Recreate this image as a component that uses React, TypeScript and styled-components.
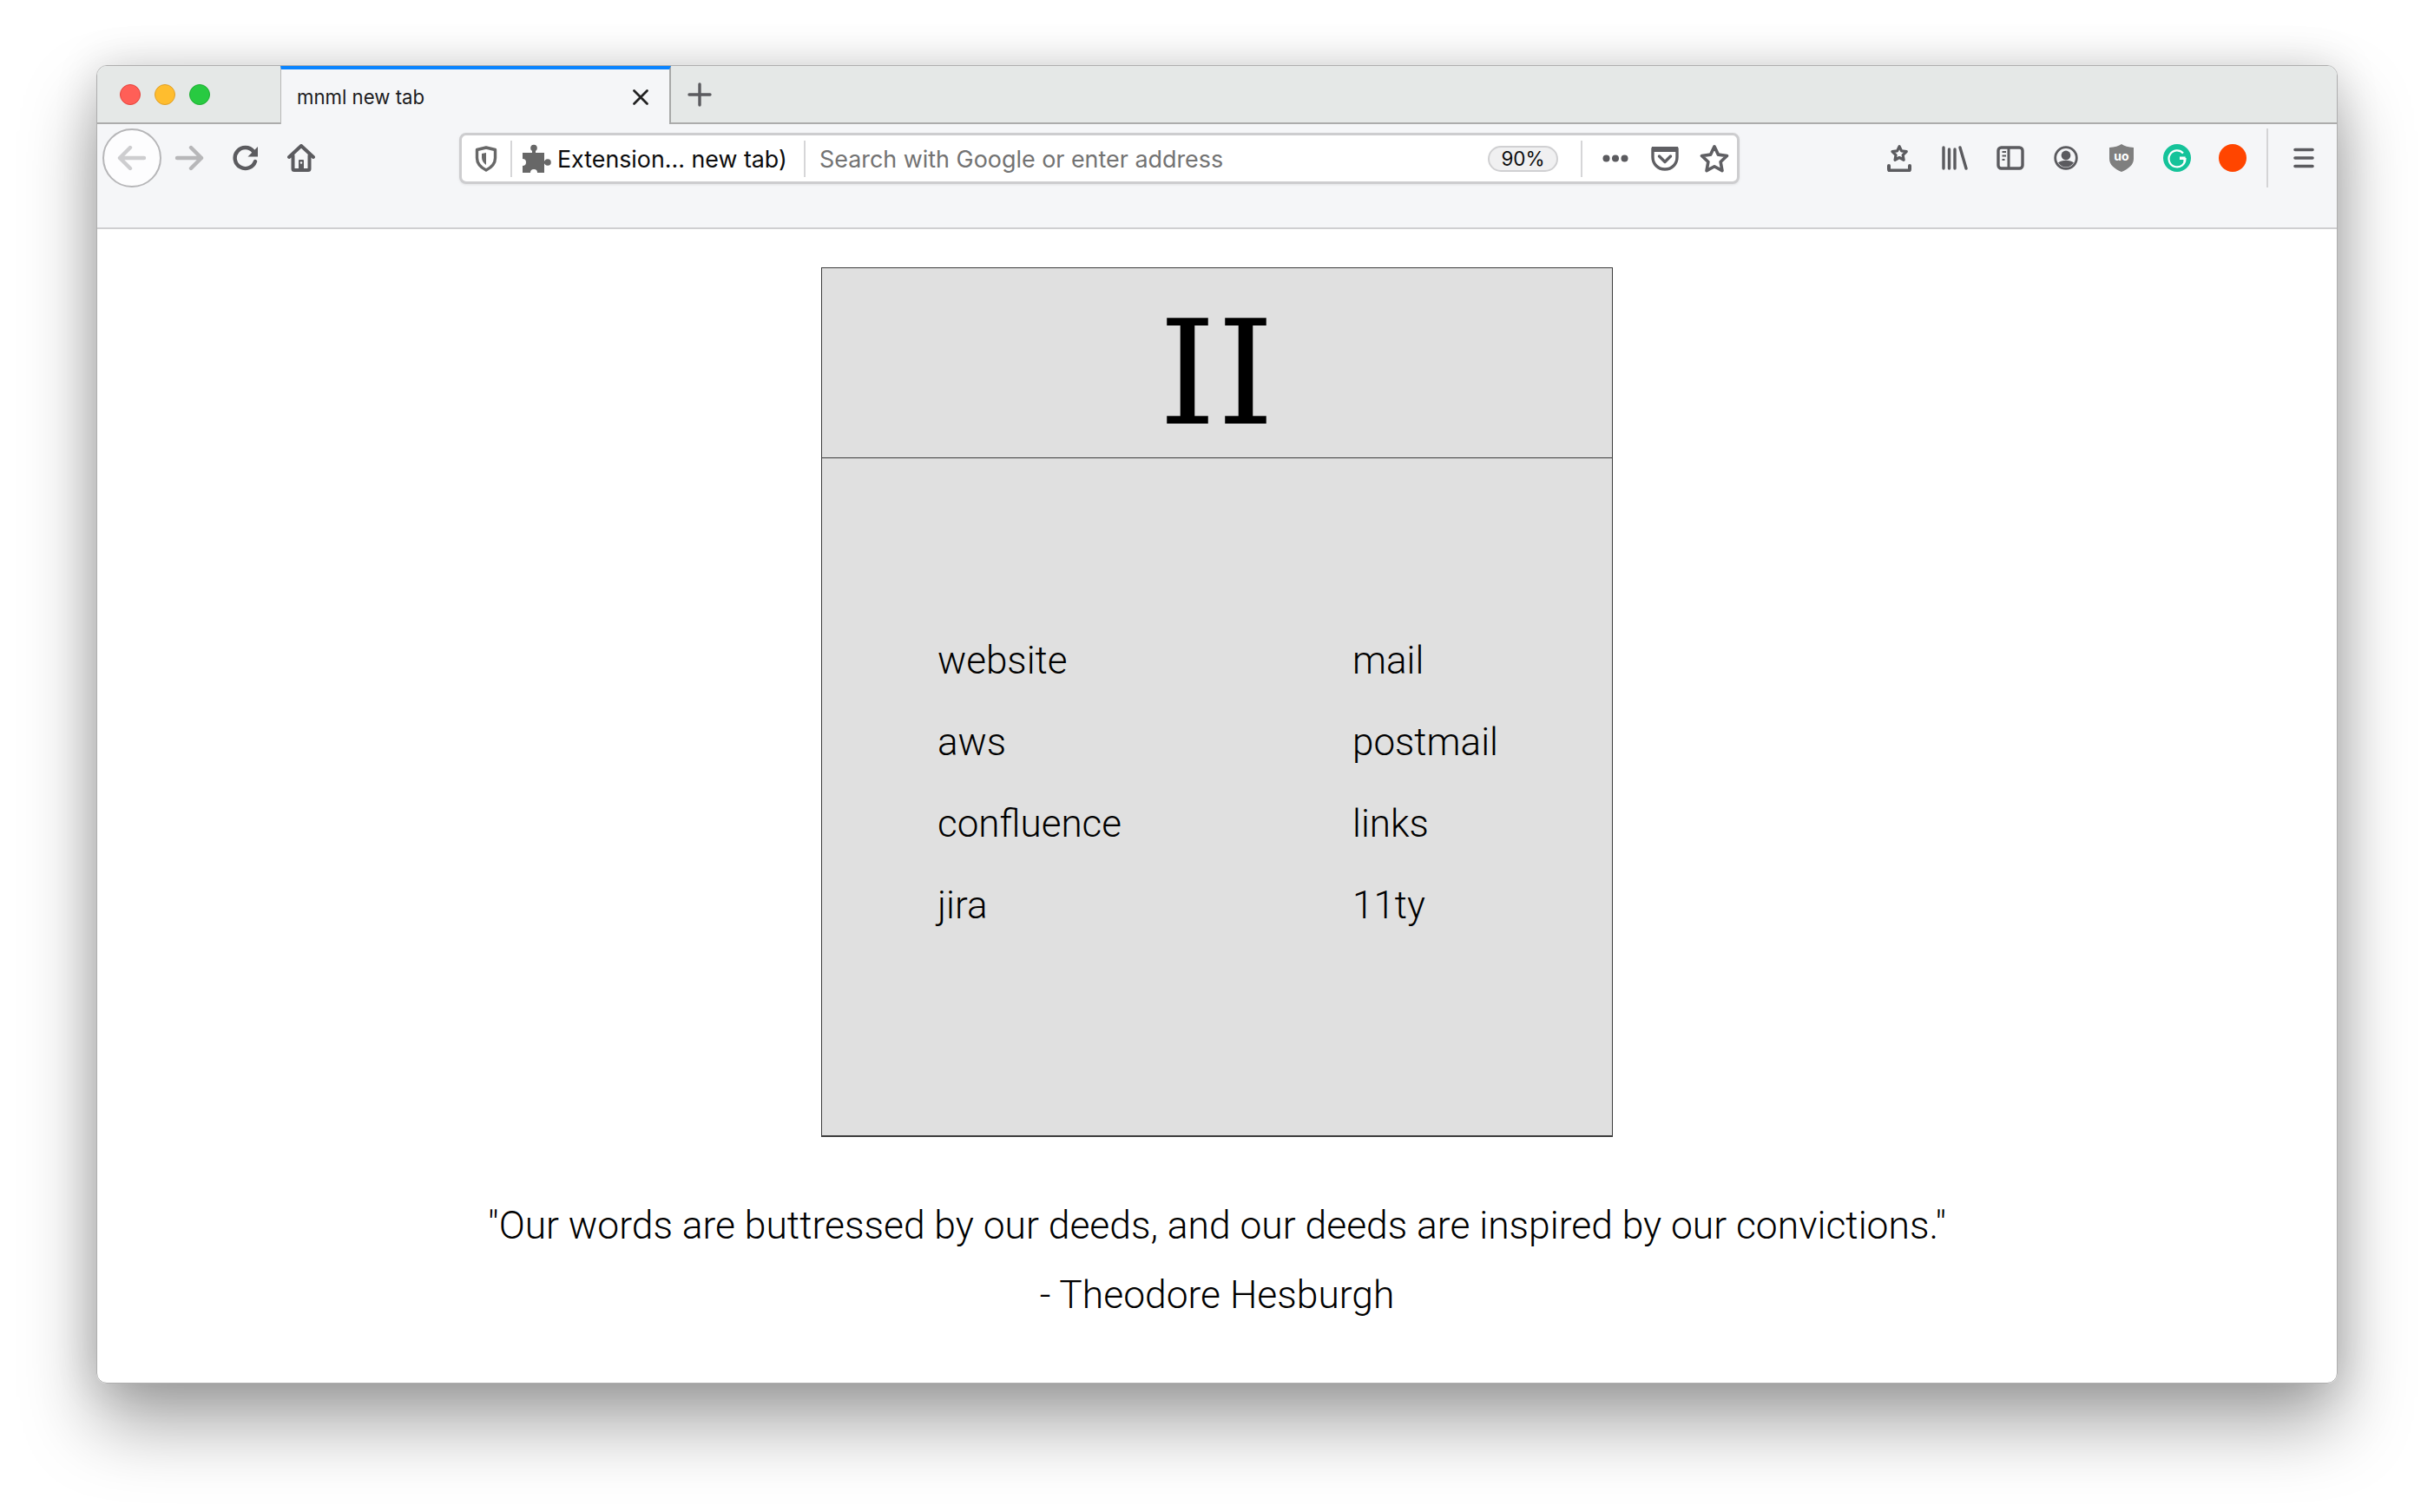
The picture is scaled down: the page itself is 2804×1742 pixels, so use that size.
import React from 'react';
import styled, { createGlobalStyle } from 'styled-components';

const GlobalStyle = createGlobalStyle`
  html, body {
    margin: 0;
    padding: 0;
    background: #fff;
    overflow: hidden;
  }
  * {
    box-sizing: border-box;
  }
`;

const uiFont = `Inter, "Liberation Sans", sans-serif`;
const pageFont = `Roboto, "Noto Sans", sans-serif`;
const iconGray = '#5b5b5f';

const Stage = styled.div`
  width: 2804px;
  height: 1742px;
  padding: 75px 111px 0;
`;

const Window = styled.div`
  width: 2582px;
  height: 1519px;
  border-radius: 12px;
  overflow: hidden;
  background: #fff;
  border: 1px solid #aeaeae;
`;

const Shadowed = styled.div`
  border-radius: 12px;
  box-shadow: 0 46px 84px rgba(0, 0, 0, 0.36), 0 0 50px rgba(0, 0, 0, 0.14);
`;

const TabBar = styled.div`
  display: flex;
  height: 67px;
  background: #e5e8e7;
  border-bottom: 2px solid #acacac;
`;

const Lights = styled.div`
  display: flex;
  align-items: center;
  gap: 16px;
  width: 211px;
  padding-left: 26px;
`;

const Light = styled.span<{ $fill: string; $edge: string }>`
  width: 24px;
  height: 24px;
  border-radius: 50%;
  background: ${p => p.$fill};
  border: 1px solid ${p => p.$edge};
`;

const Tab = styled.div`
  display: flex;
  align-items: center;
  justify-content: space-between;
  width: 450px;
  height: 67px;
  margin-bottom: -2px;
  padding: 0 23px 0 18px;
  background: #f5f6f8;
  border-top: 4px solid #0a84ff;
  border-left: 1px solid #b8b8b8;
  border-right: 2px solid #a8a8a8;
  font: 400 22.2px ${uiFont};
  color: #1c1c1e;
`;

const NewTab = styled.div`
  display: flex;
  align-items: center;
  justify-content: center;
  width: 66px;
`;

const Toolbar = styled.div`
  display: flex;
  align-items: flex-start;
  height: 121px;
  padding: 5px 0 0 6px;
  background: #f5f6f8;
  border-bottom: 2px solid #cfcfd1;
`;

const BackCircle = styled.div`
  display: flex;
  align-items: center;
  justify-content: center;
  width: 68px;
  height: 68px;
  border-radius: 50%;
  background: #fdfdfe;
  border: 2px solid #b6b6b8;
`;

const Slot = styled.div<{ $width?: number; $pad?: number }>`
  display: flex;
  align-items: center;
  justify-content: center;
  flex: none;
  width: ${p => p.$width ?? 64}px;
  height: 68px;
  padding-left: ${p => p.$pad ?? 0}px;
`;

const InlineSlot = styled(Slot)`
  height: 52px;
`;

const UrlBar = styled.div`
  display: flex;
  align-items: center;
  flex: none;
  width: 1475px;
  height: 59px;
  margin: 5px 152px 0 151px;
  background: #fff;
  border: 3px solid #cdcdcf;
  border-radius: 8px;
  box-shadow: 0 1px 3px rgba(0, 0, 0, 0.08);
`;

const UrlDivider = styled.span`
  flex: none;
  width: 2px;
  height: 42px;
  background: #d6d6d8;
`;

const ExtLabel = styled.span`
  flex: none;
  width: 286px;
  padding-left: 2px;
  font: 400 26.8px ${uiFont};
  color: #0c0c0d;
  white-space: nowrap;
`;

const Placeholder = styled.span`
  flex: 1;
  padding-left: 16px;
  font: 400 26.9px ${uiFont};
  color: #737373;
  white-space: nowrap;
`;

const Zoom = styled.span`
  flex: none;
  display: flex;
  align-items: center;
  justify-content: center;
  width: 81px;
  height: 30px;
  margin-right: 26px;
  border-radius: 15px;
  background: #f0f0f1;
  border: 2px solid #d0d0d2;
  font: 400 22.5px ${uiFont};
  color: #0c0c0d;
`;

const ToolDivider = styled.span`
  flex: none;
  width: 2px;
  height: 68px;
  margin: 0 9px 0 7px;
  background: #d4d4d6;
`;

const Content = styled.main`
  display: flex;
  flex-direction: column;
  align-items: center;
  padding-top: 44px;
`;

const Card = styled.section`
  width: 912px;
  height: 1002px;
  background: #e0e0e0;
  border: 1px solid #3c3c3c;
  border-bottom-width: 2px;
`;

const CardHeader = styled.header`
  display: flex;
  align-items: center;
  justify-content: center;
  height: 219px;
  padding-top: 24px;
  border-bottom: 1px solid #3c3c3c;
`;

const Clock = styled.h1`
  margin: 0;
  font: 400 167px/1 "DejaVu Serif", serif;
  letter-spacing: 1px;
  color: #000;
`;

const Links = styled.div`
  display: grid;
  grid-template-columns: 478px auto;
  grid-auto-rows: 94px;
  padding: 186px 0 0 133px;
`;

const LinkItem = styled.a`
  display: flex;
  align-items: center;
  font: 300 44px ${pageFont};
  color: #000;
  text-decoration: none;
`;

const Quote = styled.p`
  margin: 0;
  font: 300 44.4px/80px ${pageFont};
  color: #000;
  text-align: center;
`;

const QuoteBlock = styled.div`
  padding-top: 62px;
`;

const Glyph = styled.svg<{ $w: number; $h: number }>`
  display: block;
  flex: none;
  width: ${p => p.$w}px;
  height: ${p => p.$h}px;
`;

const strokeProps = {
  fill: 'none',
  strokeLinecap: 'round' as const,
  strokeLinejoin: 'round' as const,
};

const links = [
  ['website', 'mail'],
  ['aws', 'postmail'],
  ['confluence', 'links'],
  ['jira', '11ty'],
];

const Arrow: React.FC<{ color: string; flip?: boolean }> = ({ color, flip }) => (
  <Glyph $w={34} $h={30} viewBox="0 0 34 30">
    <path
      d={flip ? 'M31 15H3M19 3l12 12-12 12' : 'M31 15H3M15 3L3 15l12 12'}
      stroke={color}
      strokeWidth="4.4"
      {...strokeProps}
    />
  </Glyph>
);

const Reload = () => (
  <Glyph $w={32} $h={30} viewBox="0 0 32 30">
    <path d="M25 7.5A12 12 0 1 0 27 19" stroke={iconGray} strokeWidth="4.4" {...strokeProps} />
    <path d="M30 2v11.5H18.5z" fill={iconGray} />
  </Glyph>
);

const Home = () => (
  <Glyph $w={32} $h={32} viewBox="0 0 32 32">
    <path
      d="M2 15L16 2l14 13M6.5 13v15.5a1.5 1.5 0 0 0 1.5 1.5h16a1.5 1.5 0 0 0 1.5-1.5V13"
      stroke={iconGray}
      strokeWidth="4"
      {...strokeProps}
    />
    <path d="M13 30V19a1 1 0 0 1 1-1h4a1 1 0 0 1 1 1v11zM6 28h20v3H6z" fill={iconGray} />
    <circle cx="16" cy="21.500" r="1.200" fill="#f5f6f8" />
  </Glyph>
);

const TrackingShield = () => (
  <Glyph $w={26} $h={30} viewBox="0 0 26 30">
    <path d="M13 2L2.500 4.500V14c0 6 4.500 11 10.500 14 6-3 10.500-8 10.500-14V4.500z" stroke="#686868" strokeWidth="3.400" {...strokeProps} />
    <path d="M13 8v14c-3-2-5-5-5-8.500V9z" fill="#686868" />
  </Glyph>
);

const Puzzle = () => (
  <Glyph $w={34} $h={34} viewBox="0 0 34 34">
    <g fill="#676767">
      <path d="M1 10h25v23H1z" />
      <path d="M12 4h4v8h-4z" />
      <circle cx="14" cy="4.500" r="3.800" />
      <path d="M24 19.500h6v3h-6z" />
      <circle cx="30" cy="21" r="3.800" />
    </g>
    <circle cx="1" cy="21" r="4" fill="#fff" />
    <circle cx="14" cy="33" r="4" fill="#fff" />
  </Glyph>
);

const Dots = () => (
  <Glyph $w={30} $h={9} viewBox="0 0 30 9">
    <g fill="#5b5b5f">
      <circle cx="4.500" cy="4.500" r="4" />
      <circle cx="15" cy="4.500" r="4" />
      <circle cx="25.500" cy="4.500" r="4" />
    </g>
  </Glyph>
);

const Pocket = () => (
  <Glyph $w={32} $h={30} viewBox="0 0 32 30">
    <path d="M2 3h28v10c0 8-6 14-14 14S2 21 2 13z" stroke="#5f5f63" strokeWidth="3.400" {...strokeProps} />
    <path d="M1 1h30v6H1z" fill="#5f5f63" />
    <path d="M9.500 12l6.500 6.500 6.500-6.500" stroke="#5f5f63" strokeWidth="3.400" {...strokeProps} />
  </Glyph>
);

const starPath = 'M15 2.500l3.900 8.200 8.900 1.200-6.500 6.200 1.600 8.900L15 22.700l-7.900 4.300 1.600-8.900-6.500-6.200 8.900-1.200z';

const Star = () => (
  <Glyph $w={34} $h={34} viewBox="0 0 30 30">
    <path d={starPath} stroke="#5f5f63" strokeWidth="3.200" {...strokeProps} />
  </Glyph>
);

const SavedStar = () => (
  <Glyph $w={28} $h={32} viewBox="0 0 28 32">
    <g transform="translate(4.500 1) scale(0.64)">
      <path d={starPath} stroke={iconGray} strokeWidth="5" {...strokeProps} />
    </g>
    <path d="M2 25v4a1.500 1.500 0 0 0 1.500 1.500h21A1.500 1.500 0 0 0 26 29v-4" stroke={iconGray} strokeWidth="4" {...strokeProps} />
  </Glyph>
);

const Library = () => (
  <Glyph $w={30} $h={28} viewBox="0 0 30 28">
    <path d="M2 2v24M8.500 4v22M15 4v22M21 2l7 24" stroke={iconGray} strokeWidth="3.400" {...strokeProps} />
  </Glyph>
);

const Sidebar = () => (
  <Glyph $w={32} $h={28} viewBox="0 0 32 28">
    <rect x="2" y="2" width="28" height="24" rx="3.500" stroke={iconGray} strokeWidth="3.400" fill="none" />
    <path d="M14 2v24" stroke={iconGray} strokeWidth="3" />
    <path d="M6.500 7h4.500M6.500 11.500h4.500M6.500 16h3" stroke={iconGray} strokeWidth="2" />
  </Glyph>
);

const Profile = () => (
  <Glyph $w={28} $h={28} viewBox="0 0 28 28">
    <circle cx="14" cy="14" r="12.300" stroke={iconGray} strokeWidth="2.800" fill="none" />
    <circle cx="14" cy="11" r="5.400" fill={iconGray} />
    <path d="M5 19.500c2.500-2 5-2.500 9-2.500s6.500.5 9 2.500c-2 3-5.500 5-9 5s-7-2-9-5z" fill={iconGray} />
  </Glyph>
);

const UBlock = () => (
  <Glyph $w={28} $h={32} viewBox="0 0 28 32">
    <path d="M14 0c3 2.500 8 3.500 14 4v13c0 7-6 11.500-14 15C6 28.500 0 24 0 17V4c6-.5 11-1.500 14-4z" fill="#7f7f7f" />
    <text x="14" y="19" textAnchor="middle" fontFamily="Inter, sans-serif" fontSize="14" fontWeight="700" fill="#fff">
      uo
    </text>
  </Glyph>
);

const Grammarly = () => (
  <Glyph $w={32} $h={32} viewBox="0 0 32 32">
    <circle cx="16" cy="16" r="16" fill="#15c39a" />
    <path d="M23 10.500A9.500 9.500 0 1 0 25.500 17H19" stroke="#fff" strokeWidth="2.200" fill="none" />
    <path d="M24.500 21v-5.500H19" stroke="#fff" strokeWidth="2.200" fill="none" />
  </Glyph>
);

const OrangeDot = () => (
  <Glyph $w={32} $h={32} viewBox="0 0 32 32">
    <circle cx="16" cy="16" r="16" fill="#ff4500" />
  </Glyph>
);

const Hamburger = () => (
  <Glyph $w={24} $h={24} viewBox="0 0 24 24">
    <path d="M2 2.500h20M2 12h20M2 21.500h20" stroke={iconGray} strokeWidth="3.600" {...strokeProps} />
  </Glyph>
);

const Close = () => (
  <Glyph $w={20} $h={20} viewBox="0 0 20 20">
    <path d="M2.500 2.500l15 15M17.500 2.500l-15 15" stroke="#222" strokeWidth="2.800" {...strokeProps} />
  </Glyph>
);

const Plus = () => (
  <Glyph $w={28} $h={28} viewBox="0 0 28 28">
    <path d="M14 2v24M2 14h24" stroke={iconGray} strokeWidth="3.400" {...strokeProps} />
  </Glyph>
);

export default function App() {
  return (
    <Stage>
      <GlobalStyle />
      <Shadowed>
        <Window>
          <TabBar>
            <Lights>
              <Light $fill="#ff5f57" $edge="#e5443d" />
              <Light $fill="#ffbd2e" $edge="#e0a028" />
              <Light $fill="#28ca41" $edge="#1fae33" />
            </Lights>
            <Tab>
              mnml new tab
              <Close />
            </Tab>
            <NewTab>
              <Plus />
            </NewTab>
          </TabBar>
          <Toolbar>
            <BackCircle>
              <Arrow color="#cdcdcf" />
            </BackCircle>
            <Slot>
              <Arrow color="#b7b7b9" flip />
            </Slot>
            <Slot $width={65}>
              <Reload />
            </Slot>
            <Slot $width={63}>
              <Home />
            </Slot>
            <UrlBar>
              <InlineSlot $width={56}>
                <TrackingShield />
              </InlineSlot>
              <UrlDivider />
              <InlineSlot $width={50} $pad={6}>
                <Puzzle />
              </InlineSlot>
              <ExtLabel>Extension... new tab)</ExtLabel>
              <UrlDivider />
              <Placeholder>Search with Google or enter address</Placeholder>
              <Zoom>90%</Zoom>
              <UrlDivider />
              <InlineSlot $width={65} $pad={11}>
                <Dots />
              </InlineSlot>
              <InlineSlot $width={60}>
                <Pocket />
              </InlineSlot>
              <InlineSlot $width={53}>
                <Star />
              </InlineSlot>
            </UrlBar>
            <Slot><SavedStar /></Slot>
            <Slot><Library /></Slot>
            <Slot><Sidebar /></Slot>
            <Slot><Profile /></Slot>
            <Slot><UBlock /></Slot>
            <Slot><Grammarly /></Slot>
            <Slot><OrangeDot /></Slot>
            <ToolDivider />
            <Slot><Hamburger /></Slot>
          </Toolbar>
          <Content>
            <Card>
              <CardHeader>
                <Clock>II</Clock>
              </CardHeader>
              <Links>
                {links.flat().map(label => (
                  <LinkItem key={label}>{label}</LinkItem>
                ))}
              </Links>
            </Card>
            <QuoteBlock>
              <Quote>"Our words are buttressed by our deeds, and our deeds are inspired by our convictions."</Quote>
              <Quote>- Theodore Hesburgh</Quote>
            </QuoteBlock>
          </Content>
        </Window>
      </Shadowed>
    </Stage>
  );
}
